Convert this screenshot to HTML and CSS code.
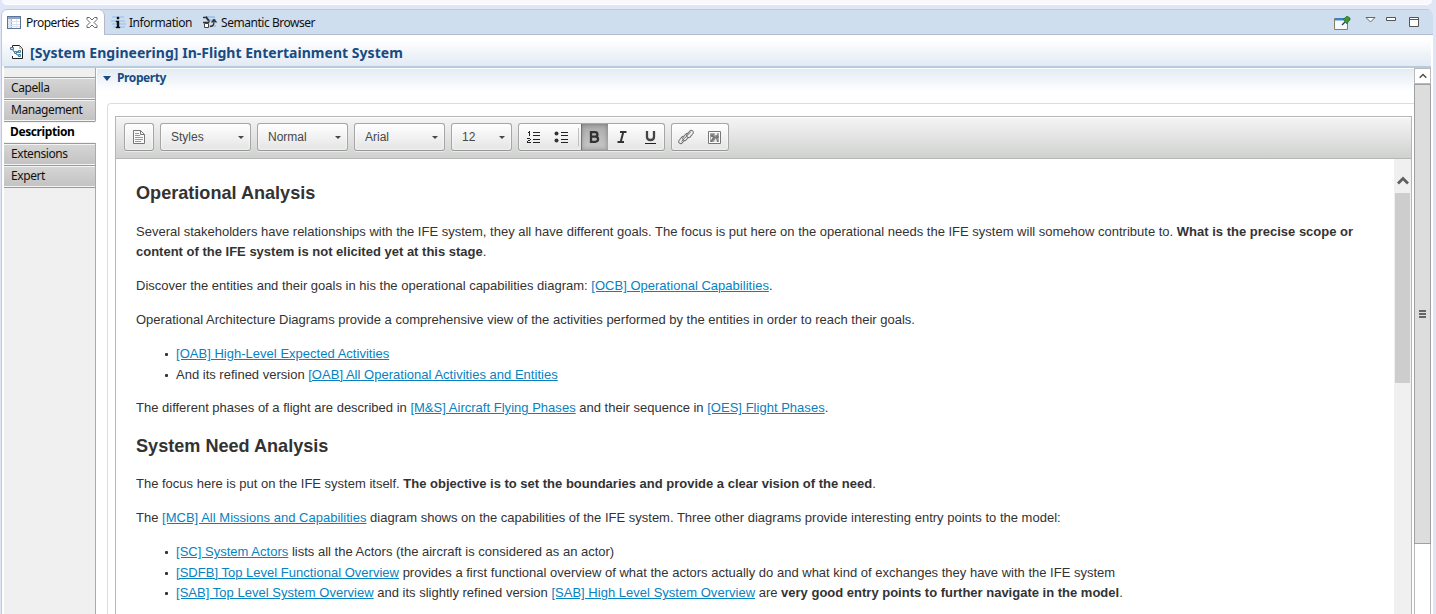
FILE: index.html
```html
<!DOCTYPE html>
<html lang="en">
<head>
<meta charset="utf-8">
<title>Properties</title>
<link rel="stylesheet" href="styles.css">
</head>
<body>
<div class="upper-pane"></div>
<div class="view">
  <header class="tabbar">
    <div class="tab tab-active">
      <svg class="ic-table" width="14" height="13" viewBox="0 0 14 13" shape-rendering="crispEdges"><path d="M0 0h14v13H0z" fill="#5d7396"/><path d="M1 3h12v9H1z" fill="#fff"/><path d="M1 1h12v2H1z" fill="#8fa5c8"/><path d="M1 3h3v9H1z" fill="#dce6f5"/><path d="M4 3h1v9H4z" fill="#9fb1cb"/><path d="M9 3h1v9H9z" fill="#e3eaf4"/><path d="M1 5h12v1H1zM1 8h12v1H1zM1 10h12v1H1z" fill="#d5dfed"/></svg>
      <span class="tab-properties">Properties</span>
      <svg class="ic-close" width="12" height="11" viewBox="0 0 12 11"><path d="M1 .5h2.500L6 3 8.500.5H11v2L8 5.500 11 8.500v2H8.500L6 8 3.500 10.500H1v-2L4 5.500 1 2.500z" fill="#fff" stroke="#686868"/></svg>
    </div>
    <div class="tab tab-information">
      <svg width="15" height="15" viewBox="0 0 15 15"><path d="M1 2h12M0 6h14M1 9h14M2 12h12" stroke="#a8c7ee" stroke-width="1.500"/><path d="M6 2h2v2H6zM5 6h3v6h1v1H5v-1h1V7H5z" fill="#111" stroke="#111" stroke-width=".4"/></svg>
      <span>Information</span>
    </div>
    <div class="tab tab-semantic">
      <svg width="15" height="15" viewBox="0 0 15 15"><path d="M3 2h10M5 5h9M6 11h8" stroke="#a4c6ee" stroke-width="2"/><path d="M1 2.500h3l2 3M1 7.500h6M4 1.500l3 4v2M8 11.500c4 0 4-3 4-6M9.500 7.500l2.500-3 2.500 3" fill="none" stroke="#333" stroke-width="1.300"/><path d="M2.500 8.500h4v4h-4z" fill="#fff" stroke="#444"/></svg>
      <span>Semantic Browser</span>
    </div>
    <div class="view-tools">
      <svg width="17" height="15" viewBox="0 0 17 15"><path d="M.5 2.500h13v11H.5z" fill="#f5faff" stroke="#857f62"/><path d="M1 2h8v2H1z" fill="#3f7fc2"/><path d="M1 4h12v1H1z" fill="#9cc5e9"/><path d="M8 9l4-4" stroke="#345" stroke-width="1.500"/><path d="M9 3l2-1 2-2 3 2v2l-2 2-1 2z" fill="#3a9838" stroke="#1c6828" stroke-width=".7"/></svg>
      <svg class="tool-menu" width="11" height="7" viewBox="0 0 11 7"><path d="M1 .5h9L5.500 5z" fill="#fff" stroke="#666"/></svg>
      <svg class="tool-min" width="10" height="4" viewBox="0 0 10 4"><path d="M.5.5h9v3h-9z" fill="#fff" stroke="#555"/></svg>
      <svg class="tool-max" width="10" height="10" viewBox="0 0 10 10"><path d="M.5.5h9v9h-9zM0 2.500h10" fill="#fff" stroke="#555"/></svg>
    </div>
  </header>
  <div class="title">
    <svg width="14" height="15" viewBox="0 0 14 15"><path d="M2.500 3V.5h7l3 3v10h-10V11" fill="#fff" stroke="#222"/><path d="M9.500 1v2.500h3" fill="#e8e0b0" stroke="#c5bd90"/><path d="M2 4l3 4 5-2-5 2 4 3" fill="none" stroke="#27628a"/><g fill="#b9e3f7" stroke="#3d7ca5"><path d="M.5 2.500h3v2h-3zM4.500 6.500h2v2h-2zM8.500 5.500h2v2h-2zM8.500 9.500h2v2h-2z"/></g></svg>
    <h1>[System Engineering] In-Flight Entertainment System</h1>
  </div>
  <div class="body">
    <nav class="side">
      <a><span>Capella</span></a>
      <a><span>Management</span></a>
      <a class="selected"><span>Description</span></a>
      <a><span>Extensions</span></a>
      <a><span>Expert</span></a>
    </nav>
    <main class="page">
      <div class="section-head"><i class="twistie"></i><h2>Property</h2></div>
      <div class="group">
        <div class="editor">
          <div class="toolbar">
            <button class="box single"><svg width="12" height="14" viewBox="0 0 12 14"><path d="M.5.500h7l4 4v9H.5z" fill="#fafafa" stroke="#777"/><path d="M7.500.5v4h4" fill="none" stroke="#777"/><path d="M2 3.500h4M2 5.500h5M2 7.500h8M2 9.500h8M2 11.500h6" stroke="#999"/></svg></button>
            <button class="box combo"><span>Styles</span><i></i></button>
            <button class="box combo"><span>Normal</span><i></i></button>
            <button class="box combo"><span>Arial</span><i></i></button>
            <button class="box combo size"><span>12</span><i></i></button>
            <div class="box group-format">
              <b class="cell"><svg width="13" height="14" viewBox="0 0 13 14" shape-rendering="crispEdges"><path d="M6 2h7v1H6zM6 5h7v1H6zM6 9h7v1H6zM6 12h7v1H6zM2 1h1v5H2zM1 2h1v1H1zM0 8h3v1H0zM3 9h1v1H3zM1 10h2v1H1zM0 11h1v1H0zM0 12h4v1H0z" fill="#222"/></svg></b>
              <b class="cell"><svg width="14" height="12" viewBox="0 0 14 12"><circle cx="2.500" cy="2.500" r="2" fill="#333"/><circle cx="2.500" cy="9.500" r="2" fill="#333"/><path d="M7 1.500h7M7 4.500h7M7 8.500h7M7 11.500h7" stroke="#222"/></svg></b>
              <b class="divider"></b>
              <b class="cell pressed"><svg width="11" height="12" viewBox="0 0 11 12"><path d="M2 1.200h3.800c3.500 0 3.500 4.400 0 4.400H2zM2 5.600h4.200c3.800 0 3.800 5.200 0 5.200H2z" fill="none" stroke="#333" stroke-width="2.300"/></svg></b>
              <b class="cell"><svg width="10" height="12" viewBox="0 0 10 12"><path d="M3 1h6.500M.5 11H7M6.300 1L3.700 11" fill="none" stroke="#333" stroke-width="2"/></svg></b>
              <b class="cell"><svg width="11" height="13" viewBox="0 0 11 13"><path d="M2 0v6c0 4 7 4 7 0V0" fill="none" stroke="#444" stroke-width="2.300"/><path d="M0 12.500h11" stroke="#222"/></svg></b>
            </div>
            <div class="box group-insert">
              <b class="cell"><svg width="16" height="16" viewBox="0 0 16 16"><g fill="#eee" stroke="#777" stroke-width="1"><rect x="-4" y="-2" width="8" height="4" rx="2" transform="translate(4 11) rotate(-50)"/><rect x="-4" y="-2" width="8" height="4" rx="2" transform="translate(8 8) rotate(-50)"/><rect x="-4" y="-2" width="8" height="4" rx="2" transform="translate(12 5) rotate(-50)"/><path d="M3.500 12.500l9-9.500"/></g></svg></b>
              <b class="cell"><svg width="13" height="13" viewBox="0 0 13 13"><path d="M.5.500h12v12H.5z" fill="#fff" stroke="#777"/><path d="M2 2h9v9H2z" fill="#aaa"/><path d="M2 4l3-1 1 2 2 1 1-3 2 3-2 2 2 3H9L7 7l-3 4H2l2-4z" fill="#777"/><path d="M7 2h2v2H7zM3 6h2L3 9zM7 9l1-2 1 4H6z" fill="#eee"/></svg></b>
            </div>
          </div>
          <div class="document">
            <article>
              <h3>Operational Analysis</h3>
              <p>Several stakeholders have relationships with the IFE system, they all have different goals. The focus is put here on the operational needs the IFE system will somehow contribute to. <strong>What is the precise scope or<br>content of the IFE system is not elicited yet at this stage</strong>.</p>
              <p>Discover the entities and their goals in his the operational capabilities diagram: <a>[OCB] Operational Capabilities</a>.</p>
              <p>Operational Architecture Diagrams provide a comprehensive view of the activities performed by the entities in order to reach their goals.</p>
              <ul><li><a>[OAB] High-Level Expected Activities</a></li><li>And its refined version <a>[OAB] All Operational Activities and Entities</a></li></ul>
              <p>The different phases of a flight are described in <a>[M&amp;S] Aircraft Flying Phases</a> and their sequence in <a>[OES] Flight Phases</a>.</p>
              <h3>System Need Analysis</h3>
              <p>The focus here is put on the IFE system itself. <strong>The objective is to set the boundaries and provide a clear vision of the need</strong>.</p>
              <p>The <a>[MCB] All Missions and Capabilities</a> diagram shows on the capabilities of the IFE system. Three other diagrams provide interesting entry points to the model:</p>
              <ul><li><a>[SC] System Actors</a> lists all the Actors (the aircraft is considered as an actor)</li><li><a>[SDFB] Top Level Functional Overview</a> provides a first functional overview of what the actors actually do and what kind of exchanges they have with the IFE system</li><li><a>[SAB] Top Level System Overview</a> and its slightly refined version <a>[SAB] High Level System Overview</a> are <strong>very good entry points to further navigate in the model</strong>.</li></ul>
            </article>
            <div class="inner-scroll">
              <svg width="12" height="10" viewBox="0 0 12 10"><path d="M1 8.500l5-5 5 5" fill="none" stroke="#606060" stroke-width="2.800"/></svg>
              <div class="inner-thumb"></div>
            </div>
          </div>
        </div>
      </div>
    </main>
    <div class="outer-scroll">
      <div class="outer-up"><svg width="8" height="6" viewBox="0 0 8 6"><path d="M.7 4.800L4 1.500l3.300 3.300" fill="none" stroke="#505050" stroke-width="1.500"/></svg></div>
      <div class="outer-thumb"><i></i><i></i><i></i></div>
    </div>
  </div>
</div>
</body>
</html>
```
FILE: styles.css
```css
* { box-sizing: border-box; }
body { margin: 0; width: 1436px; height: 614px; overflow: hidden; background: #e1e6f6; font: 12px "Noto Sans", "Open Sans", sans-serif; color: #111; display: flex; flex-direction: column; }
svg { display: block; flex: none; }
.upper-pane { height: 5px; flex: none; margin: 0 4px 0 2px; background: #f8f9fd; border-bottom: 1px solid #fff; border-radius: 0 0 5px 5px; }
.view { margin: 4px 3px 0 1px; height: 605px; border-left: 1px solid #c5c9d6; border-radius: 6px 6px 0 0; background: #fff; overflow: hidden; display: flex; flex-direction: column; }
.tabbar { height: 26px; flex: none; display: flex; background: #cfdeee; border-top: 1px solid #c4c7d0; border-bottom: 1px solid #b3bdd2; }
.tab { display: flex; align-items: center; height: 25px; white-space: nowrap; font-size: 12px; letter-spacing: -.42px; }
.tab-active { width: 103px; background: #fff; border-right: 1px solid #b4b9c8; border-radius: 6px 6px 0 0; padding-left: 5px; letter-spacing: -.52px; }
.tab-active span { margin-left: 5px; width: 54px; }
.tab-active .ic-close { margin-left: 6px; }
.tab-information { padding-left: 6px; width: 97px; letter-spacing: -.45px; }
.tab-information span { margin-left: 3px; }
.tab-semantic { letter-spacing: -.46px; }
.tab-semantic span { margin-left: 4px; }
.view-tools { margin-left: auto; display: flex; padding: 6px 12px 0 0; width: 99px; align-items: flex-start; }
.tool-menu { margin: 1px 0 0 14px; }
.tool-min { margin: 1px 0 0 10px; }
.tool-max { margin: 1px 0 0 13px; }
.title { flex: none; height: 31px; display: flex; align-items: center; padding: 3px 0 0 8px; margin-right: 2px; background: linear-gradient(#fff 15%, #e2eaf4); }
.title h1 { margin: 1px 0 0 6px; font-size: 14px; line-height: 20px; letter-spacing: .03px; color: #174b82; white-space: nowrap; }
.body { flex: 1; min-height: 0; display: flex; margin: 0 2px; border-top: 2px solid #b7cade; }
.side { width: 92px; flex: none; background: #f0f0f0; border-right: 1px solid #aaa; padding-top: 9px; }
.side a { display: flex; align-items: center; height: 22px; width: 92px; padding: 0 0 2px 7px; border-top: 1px solid #999; border-right: 1px solid #aaa; background: linear-gradient(#d6d6d6, #c2c2c2); box-shadow: inset 0 1px #f4f4f4, inset 0 -1px #f4f4f4; font-size: 12px; letter-spacing: -.42px; }
.side a.selected { background: #fff; color: #000; font-weight: bold; padding-left: 6px; border-right-color: #fff; letter-spacing: -.4px; }
.side a:last-child { height: 23px; padding-bottom: 3px; border-bottom: 1px solid #999; }
.page { flex: 1; min-width: 0; padding-left: 1px; display: flex; flex-direction: column; }
.section-head { height: 35px; flex: none; display: flex; align-items: flex-start; padding: 1px 0 0 6px; background: linear-gradient(#e2ebf4, #fff 22px); border-top: 1px solid #fff; }
.twistie { margin-top: 6px; border: 4px solid transparent; border-top: 5px solid #174b82; border-bottom: 0; }
.section-head h2 { margin: 0 0 0 6px; font-size: 12px; line-height: 16px; letter-spacing: -.4px; color: #174b82; }
.group { flex: 1; min-height: 0; margin-left: 10px; border: solid #d5dfe6; border-width: 1px 0 0 1px; border-radius: 4px 0 0; padding: 12px 2px 0 7px; }
.editor { height: 100%; border: solid #b6b6b6; border-width: 1px 1px 0; display: flex; flex-direction: column; }
.toolbar { height: 42px; flex: none; border-bottom: 1px solid #b6b6b6; background: linear-gradient(#f5f5f5, #cfd1cf); box-shadow: inset 0 1px #fff; display: flex; gap: 6px; padding: 6px 8px; }
.box { height: 28px; border: 1px solid #a6a6a6; border-bottom-color: #979797; border-radius: 3px; background: linear-gradient(#fff, #e4e4e4); box-shadow: 0 1px 0 rgba(255,255,255,.5), inset 0 0 2px 1px rgba(255,255,255,.5); display: flex; align-items: center; padding: 0; font: 12px "Liberation Sans", sans-serif; color: #474747; }
.single { width: 30px; justify-content: center; }
.combo { width: 91px; padding: 0 6px 0 10px; justify-content: space-between; }
.combo.size { width: 61px; }
.combo i { margin-top: 1px; border: 3px solid transparent; border-top-color: #474747; border-bottom: 0; }
.group-format { width: 147px; }
.group-insert { width: 58px; }
.cell { width: 28px; height: 26px; display: flex; align-items: center; justify-content: center; flex: none; }
.divider { width: 1px; height: 18px; background: #c0c0c0; margin: 0 2px 0 3px; }
.pressed { width: 27px; background: linear-gradient(#aaa, #cacaca); box-shadow: inset 0 0 4px 1px rgba(0,0,0,.25), inset 1px 0 #888; }
.document { flex: 1; min-height: 0; display: flex; }
article { flex: 1; min-width: 0; padding: 23px 20px 0; font: 13px/20.500px "Liberation Sans", sans-serif; color: #333; white-space: nowrap; overflow: hidden; }
article h3 { font-size: 18.100px; line-height: 23px; margin: 0 0 16.500px; }
article p { margin: 0 0 13.600px; }
article p + h3 { margin: 16.500px 0 16px; }
article ul { margin: 0 0 13px; padding-left: 40px; list-style: none; }
article li::before { content: ""; float: left; width: 3px; height: 3px; margin: 9px 0 0 -11px; border-radius: 1px; background: #333; }
article a { color: #0782c1; text-decoration: underline; letter-spacing: .02px; }
.inner-scroll { width: 17px; flex: none; background: #f0f0f0; display: flex; flex-direction: column; align-items: center; padding-top: 16px; }
.inner-thumb { width: 15px; height: 190px; margin-top: 8px; background: #cdcdcd; }
.outer-scroll { width: 17px; flex: none; border: solid #b9b9b9; border-width: 0 1px; background: #fff; }
.outer-up { height: 16px; display: flex; align-items: center; justify-content: center; border-top: 1px solid #b9b9b9; border-bottom: 1px solid #b9b9b9; }
.outer-thumb { height: 460px; margin: 0 -1px; border: 1px solid #a0a0a0; background: #ddd; display: flex; flex-direction: column; align-items: center; justify-content: center; gap: 1px; }
.outer-thumb i { width: 7px; height: 2px; background: #666; }
```
